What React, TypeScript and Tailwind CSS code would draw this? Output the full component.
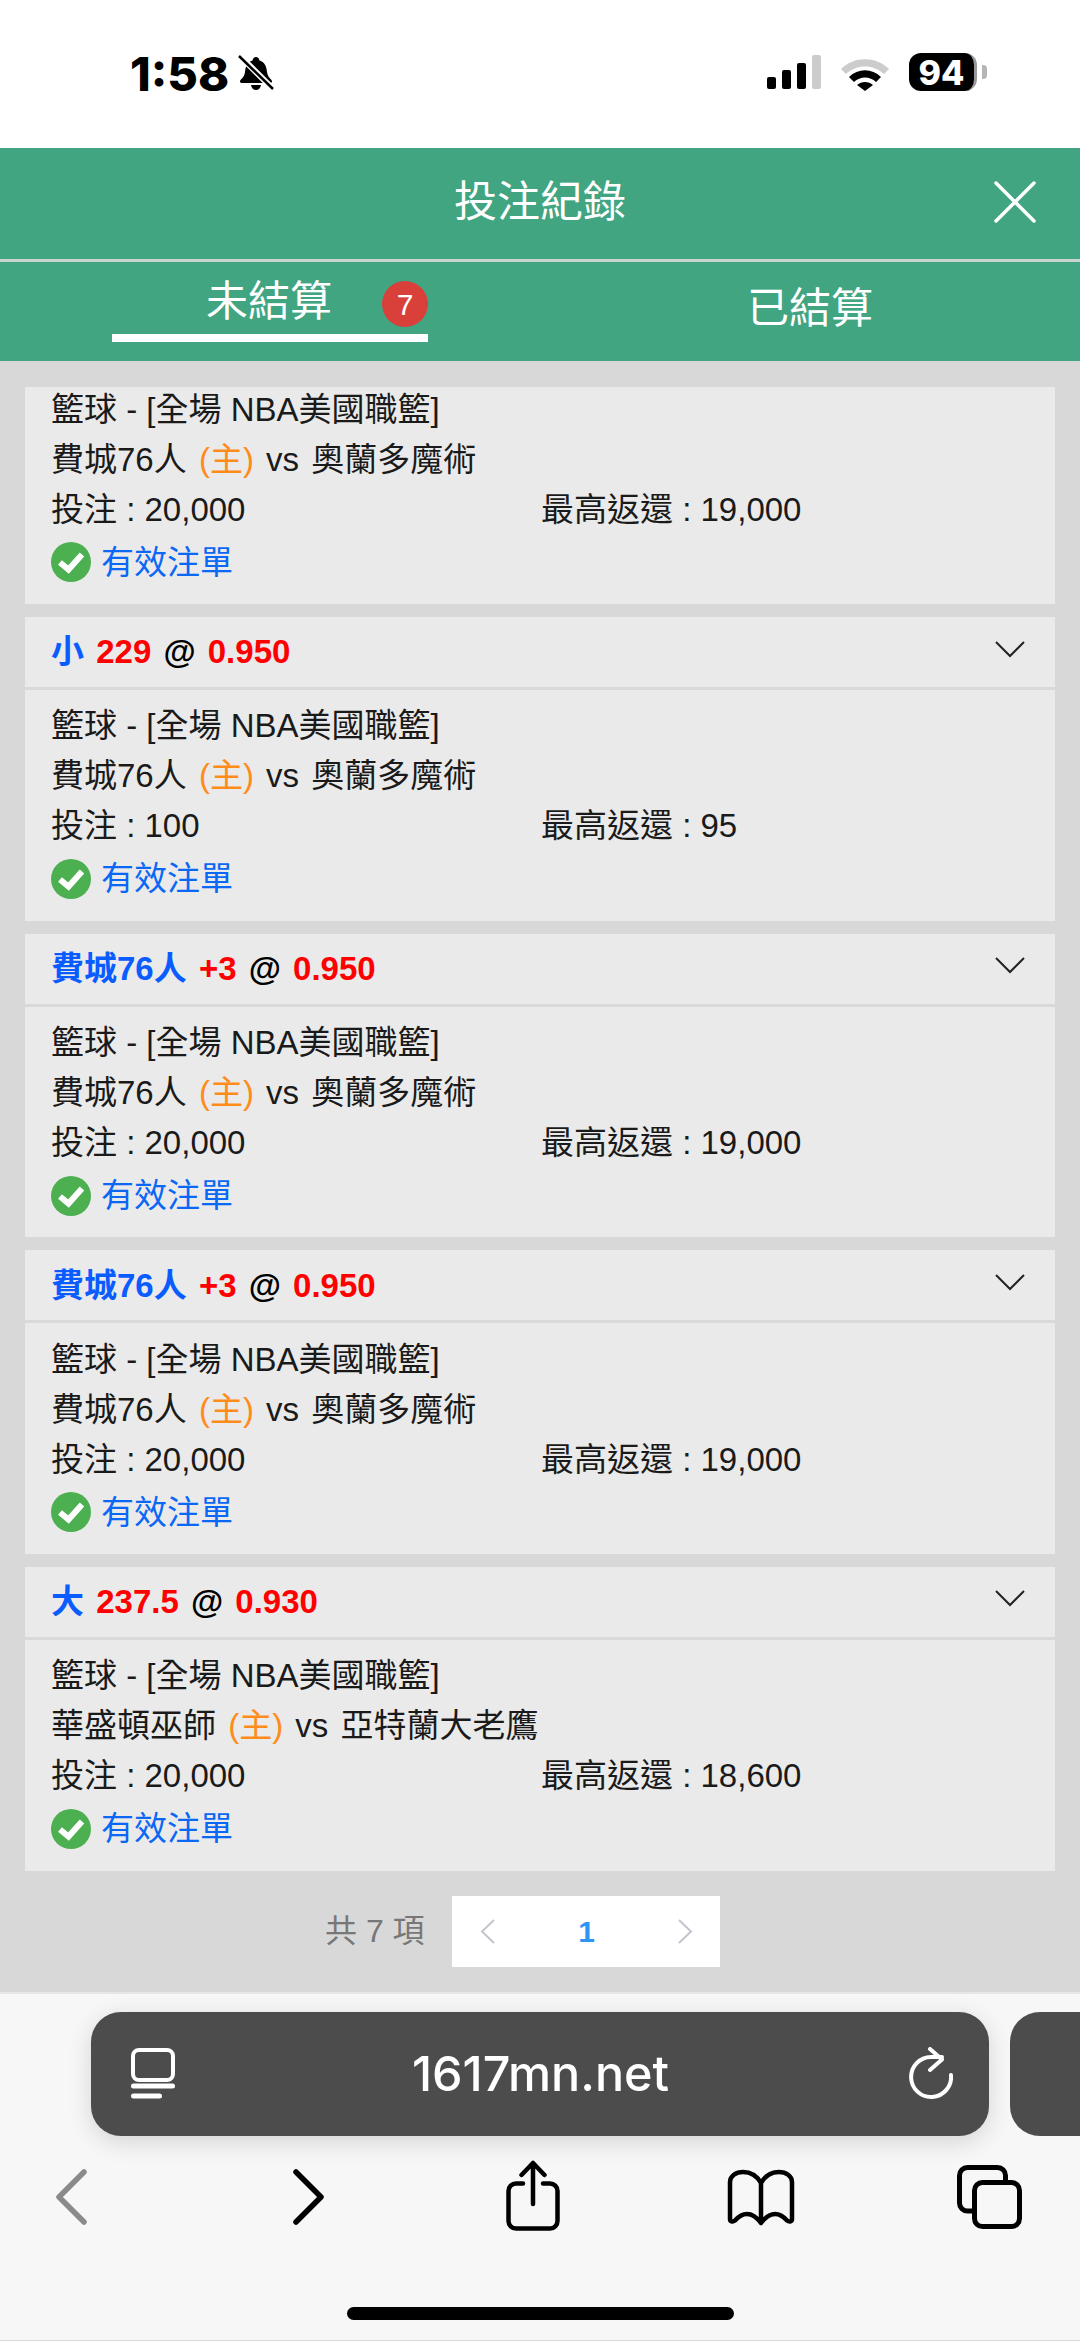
import React from 'react';

const BETS = [
  { pick: '小', line: '229', price: '0.950', home: '費城76人', away: '奧蘭多魔術', stake: '100', payout: '95' },
  { pick: '費城76人', line: '+3', price: '0.950', home: '費城76人', away: '奧蘭多魔術', stake: '20,000', payout: '19,000' },
  { pick: '費城76人', line: '+3', price: '0.950', home: '費城76人', away: '奧蘭多魔術', stake: '20,000', payout: '19,000' },
  { pick: '大', line: '237.5', price: '0.930', home: '華盛頓巫師', away: '亞特蘭大老鷹', stake: '20,000', payout: '18,600' },
];

function StatusBar() {
  return (
    <div className="flex h-[148px] shrink-0 items-start bg-white pl-[130px] pt-[53px]">
      <span className="h-[42px] w-[98px] text-[47px] leading-[42px] font-extrabold text-black [font-family:Inter,sans-serif]">1:58</span>
      <svg width="38" height="36" viewBox="0 0 38 36" className="ml-[9px] mt-[2px]">
        <path d="M19 2c2 0 3 1.500 3.500 3.500C28 7 29.500 12 30 17c.5 3.500 2 5.500 4.500 8 1 1.500.5 3-1.500 3H5c-2 0-2.500-1.500-1.500-3 2.500-2.500 4-4.500 4.500-8 .5-5 2-10 7.500-11.500C16 3.500 17 2 19 2z" fill="#000" />
        <path d="M14 30h10c-.5 3-2.500 5-5 5s-4.500-2-5-5z" fill="#000" />
        <path d="M2 0l34 34" stroke="#fff" strokeWidth="6" />
        <path d="M2 1l34 33" stroke="#000" strokeWidth="2.500" />
      </svg>
      <div className="ml-[492px] mt-[2px] flex h-[34px] items-end gap-[6px]">
        <div className="h-[12px] w-[9px] rounded-[2px] bg-black" />
        <div className="h-[19px] w-[9px] rounded-[2px] bg-black" />
        <div className="h-[26px] w-[9px] rounded-[2px] bg-black" />
        <div className="h-[34px] w-[9px] rounded-[2px] bg-[#cccccc]" />
      </div>
      <svg width="50" height="36" viewBox="0 0 50 36" className="ml-[19px] mt-[2px]">
        <path d="M1 14C14 1 36 1 49 14l-5 5C33 9 17 9 6 19z" fill="#cccccc" />
        <path d="M9 22c9-9 23-9 32 0l-5 5c-6-6-16-6-22 0z" fill="#000" />
        <path d="M17 30c4.500-4 11.500-4 16 0l-8 6z" fill="#000" />
      </svg>
      <div className="ml-[19px] flex items-center">
        <div className="flex h-[38px] w-[68px] items-center justify-center rounded-[12px] border-r-[3px] border-[#999999] bg-black text-[34px] font-extrabold text-white [font-family:Inter,sans-serif]">94</div>
        <div className="ml-[5px] h-[14px] w-[5px] rounded-r-[4px] bg-[#b5b5b5]" />
      </div>
    </div>
  );
}

function TopBar() {
  return (
    <div className="shrink-0 bg-[#41a582] text-white">
      <div className="relative flex h-[111px] items-center justify-center text-[43px]">
        <span className="-mt-[3px]">投注紀錄</span>
        <svg width="42" height="42" viewBox="0 0 42 42" className="absolute right-[44px] top-[33px]" fill="none" stroke="#fff" strokeWidth="3.500" strokeLinecap="round">
          <path d="M2 2l38 38M40 2L2 40" />
        </svg>
      </div>
      <div className="h-[3px] bg-[#c9d3cf]" />
      <div className="flex h-[99px]">
        <div className="flex w-1/2 justify-center">
          <div className="relative mt-[19px] flex h-[61px] w-[316px] justify-center border-b-[8px] border-white pr-[2px]">
            <span className="leading-[42px] text-[42px]">未結算</span>
            <span className="absolute right-0 top-0 flex h-[46px] w-[46px] items-center justify-center rounded-full bg-[#d9403a] text-[30px]">7</span>
          </div>
        </div>
        <div className="flex w-1/2 items-center justify-center text-[42px]">
          <span className="mt-[-6px]">已結算</span>
        </div>
      </div>
    </div>
  );
}

function OkIcon() {
  return (
    <svg width="40" height="40" viewBox="0 0 40 40" className="shrink-0">
      <circle cx="20" cy="20" r="20" fill="#4caf50" />
      <path d="M9 20.500l8.500 7L31 12.500" fill="none" stroke="#fff" strokeWidth="6" />
    </svg>
  );
}

type BodyProps = { home: string; away: string; stake: string; payout: string };

function BetBody({ home, away, stake, payout }: BodyProps) {
  return (
    <div className="bg-[#eaeaea] px-[26px] pt-[11px] pb-[13.670px] text-[33px] text-[#1a1a1a]">
      <div className="flex h-[50px] items-center whitespace-pre">籃球 - [全場 NBA美國職籃]</div>
      <div className="flex h-[50px] items-center whitespace-pre [word-spacing:3px]">
        {home} <span className="text-[#ff8c1a]">(主)</span> vs {away}
      </div>
      <div className="flex h-[50px] items-center whitespace-pre">
        <span className="w-[490px]">投注 : {stake}</span>
        <span>最高返還 : {payout}</span>
      </div>
      <div className="flex h-[56px] items-center gap-[10px] text-[#0a68f5]">
        <OkIcon />
        <span>有效注單</span>
      </div>
    </div>
  );
}

function BetCard({ bet }: { bet: (typeof BETS)[number] }) {
  return (
    <div>
      <div className="flex h-[70px] items-center justify-between bg-[#eaeaea] pl-[26px] pr-[30px] text-[33px] font-bold">
        <div className="whitespace-pre [word-spacing:3px]">
          <span className="text-[#0a5cff]">{bet.pick}</span>{' '}
          <span className="text-[#ff0000]">{bet.line}</span>{' '}
          <span className="text-black">@</span>{' '}
          <span className="text-[#ff0000]">{bet.price}</span>
        </div>
        <svg width="30" height="17" viewBox="0 0 30 17" className="mb-[6px]" fill="none" stroke="#222" strokeWidth="2">
          <path d="M1 1l14 14L29 1" />
        </svg>
      </div>
      <div className="h-[3px] bg-[#d9d9d9]" />
      <BetBody {...bet} />
    </div>
  );
}

function Pager() {
  return (
    <div className="mt-[25.330px] flex items-center">
      <span className="ml-[325px] w-[127px] text-[32px] text-[#777777]">共 7 項</span>
      <div className="flex h-[71px] w-[268px] items-center justify-between bg-white pl-[28px] pr-[27px]">
        <svg width="16" height="25" viewBox="0 0 16 25" fill="none" stroke="#c2c6cc" strokeWidth="2">
          <path d="M14 1L2 12.500 14 24" />
        </svg>
        <span className="text-[30px] font-bold text-[#2f95f5]">1</span>
        <svg width="16" height="25" viewBox="0 0 16 25" fill="none" stroke="#c2c6cc" strokeWidth="2">
          <path d="M2 1l12 11.500L2 24" />
        </svg>
      </div>
    </div>
  );
}

function BrowserBar() {
  return (
    <div className="flex h-[348px] shrink-0 flex-col border-t-[2px] border-[#e6e6e6] bg-[#f7f7f7]">
      <div className="mt-[18px] flex gap-[21px] pl-[91px]">
        <div className="flex h-[124px] w-[898px] shrink-0 items-center justify-between rounded-[30px] bg-[#4c4c4c] pl-[40px] pr-[36px] text-white shadow-[0_6px_24px_rgba(0,0,0,0.14)]">
          <svg width="44" height="52" viewBox="0 0 44 52" fill="none" stroke="#fff" strokeLinecap="round">
            <rect x="2" y="2" width="40" height="30" rx="6" strokeWidth="4" />
            <path d="M2.500 38h39" strokeWidth="5" />
            <path d="M2.500 48h26" strokeWidth="5" />
          </svg>
          <span className="mr-[3px] text-[48.500px] font-medium [font-family:Inter,sans-serif]">1617mn.net</span>
          <svg width="44" height="54" viewBox="0 0 44 54" fill="none" stroke="#fff" strokeWidth="4" strokeLinecap="round" strokeLinejoin="round">
            <path d="M42 28A20 20 0 1 1 22 10h11" />
            <path d="M21 2l12 10.500L21 23" />
          </svg>
        </div>
        <div className="h-[124px] flex-1 rounded-l-[30px] bg-[#4c4c4c]" />
      </div>
      <div className="mt-[26px] flex h-[70px] items-center pl-[55px]">
        <svg width="33" height="56" viewBox="0 0 33 56" fill="none" stroke="#8a8a8a" strokeWidth="5.500" strokeLinecap="round" strokeLinejoin="round">
          <path d="M29 3L4 28l25 25" />
        </svg>
        <svg width="31" height="56" viewBox="0 0 31 56" className="ml-[205px]" fill="none" stroke="#000" strokeWidth="5.500" strokeLinecap="round" strokeLinejoin="round">
          <path d="M3 3l25 25L3 53" />
        </svg>
        <svg width="54" height="71" viewBox="0 0 54 71" className="ml-[182px] -mt-[3px]" fill="none" stroke="#000" strokeWidth="4.500" strokeLinecap="round" strokeLinejoin="round">
          <path d="M17 23.500H10a7.500 7.500 0 0 0-7.500 7.500v30a7.500 7.500 0 0 0 7.500 7.500h34a7.500 7.500 0 0 0 7.500-7.500V31a7.500 7.500 0 0 0-7.500-7.500h-7" />
          <path d="M27 44V3M15.500 15L27 3l11.500 12" />
        </svg>
        <svg width="68" height="57" viewBox="0 0 68 57" className="ml-[167px]" fill="none" stroke="#000" strokeWidth="4.500" strokeLinecap="round" strokeLinejoin="round">
          <path d="M34 14C30 7 24 3 16 3 9 3 3 7 3 13v37c0 3 3 3 5 1.500C12 47 16 45 20 45c6 0 11 5 14 9 3-4 8-9 14-9 4 0 8 2 12 6.500 2 1.500 5 1.500 5-1.500V13C65 7 59 3 52 3 44 3 38 7 34 14zM34 14v40" />
        </svg>
        <svg width="65" height="64" viewBox="0 0 65 64" className="ml-[162px]" fill="none" stroke="#000" strokeWidth="5">
          <path d="M15 46h-4.500a8 8 0 0 1-8-8V10.500a8 8 0 0 1 8-8h30a8 8 0 0 1 8 8V15" />
          <rect x="17.500" y="17.500" width="45" height="44" rx="8" />
        </svg>
      </div>
      <div className="mx-auto mt-[75px] h-[13px] w-[387px] rounded-full bg-black" />
    </div>
  );
}

export default function App() {
  return (
    <div className="flex h-[2341px] w-[1080px] flex-col overflow-hidden bg-[#d8d8d8] [font-family:'Liberation_Sans','Noto_Sans_CJK_TC',sans-serif]">
      <StatusBar />
      <TopBar />
      <div className="h-[1631px] shrink-0 pt-[26px]">
        <div className="flex flex-col gap-[13px] px-[25px]">
          {/* first card is scrolled partly out of view */}
          <div className="flex h-[217px] flex-col justify-end overflow-hidden">
            <BetBody home="費城76人" away="奧蘭多魔術" stake="20,000" payout="19,000" />
          </div>
          {BETS.map((bet, i) => (
            <BetCard key={i} bet={bet} />
          ))}
        </div>
        <Pager />
      </div>
      <BrowserBar />
    </div>
  );
}
